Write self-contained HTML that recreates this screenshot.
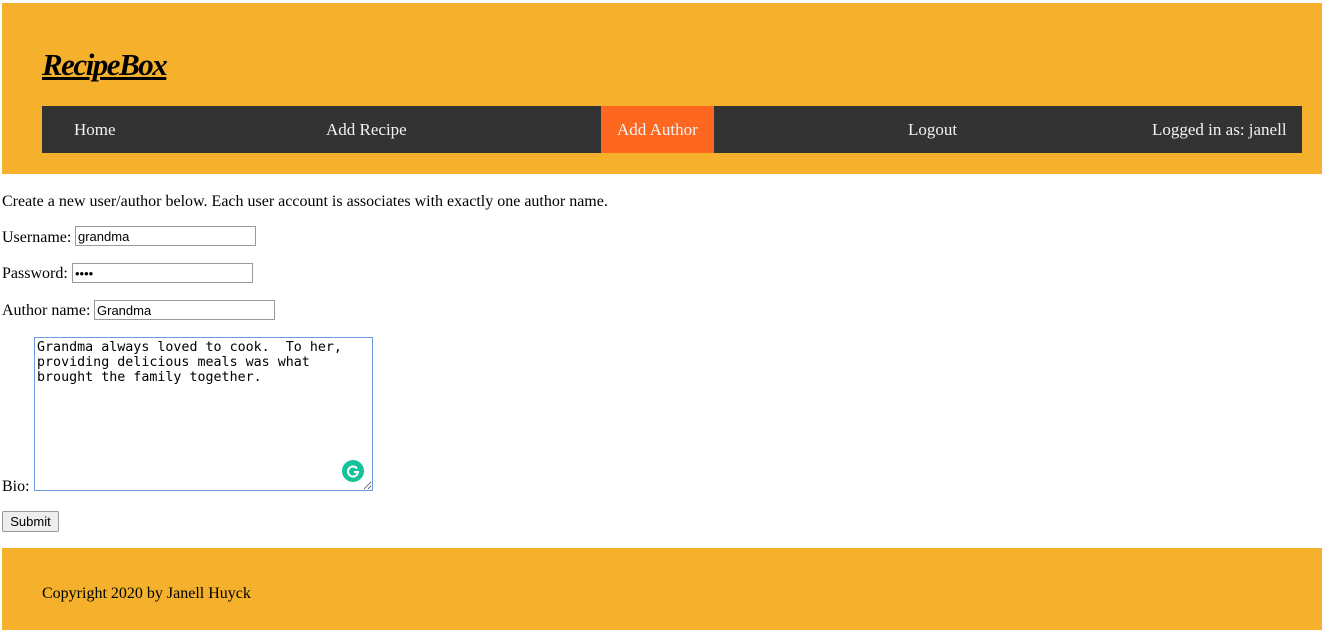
<!DOCTYPE html>
<html><head><style>
body{margin:0;font-family:"Liberation Serif",serif;font-size:16px;color:#000;background:#fff;position:relative;width:1322px;height:630px;overflow:hidden}
.hdr{position:absolute;left:2px;top:3px;width:1320px;height:171px;background:#f6b12c}
.logo{position:absolute;left:40px;top:44px;font-family:"Liberation Serif",serif;font-weight:bold;font-style:italic;font-size:31px;text-decoration:underline;text-decoration-thickness:3px;letter-spacing:-1.5px;color:#000}
.nav{position:absolute;left:40px;top:103px;width:1260px;height:47px;background:#333}
.nav span{position:absolute;top:0;line-height:47px;color:#f2f2f2;font-size:17px}
.act{background:#fd6720;padding:0 16px}
.t{position:absolute;left:2px;white-space:nowrap}
input[type=text],input[type=password]{position:absolute;height:20px;box-sizing:border-box;border:1px solid #999;font-family:"Liberation Sans",sans-serif;font-size:13px;padding:1px 2px}
textarea{position:absolute;left:34px;top:337px;width:339px;height:154px;box-sizing:border-box;border:1px solid #6a9be0;font-family:"DejaVu Sans Mono",monospace;font-size:13.33px;line-height:15px;padding:2px 24px 2px 2px;resize:both;margin:0}
.g{position:absolute;left:342px;top:460px;width:22px;height:22px;border-radius:50%;background:#15c39a}
button{position:absolute;left:2px;top:511px;width:57px;height:21px;font-family:"Liberation Sans",sans-serif;font-size:13px;border:1px solid #999;border-radius:2px;background:#eee;padding:0}
.ftr{position:absolute;left:2px;top:548px;width:1320px;height:82px;background:#f6b12c}
</style></head><body>
<div class="hdr">
<div class="logo">RecipeBox</div>
<div class="nav">
<span style="left:32px">Home</span>
<span style="left:284px">Add Recipe</span>
<span class="act" style="left:559px">Add Author</span>
<span style="left:866px">Logout</span>
<span style="left:1110px">Logged in as: janell</span>
</div>
</div>
<div class="t" style="top:193px">Create a new user/author below. Each user account is associates with exactly one author name.</div>
<div class="t" style="top:229px">Username:</div>
<input type="text" value="grandma" style="left:75px;top:226px;width:181px">
<div class="t" style="top:265px">Password:</div>
<input type="password" value="abcd" style="left:72px;top:263px;width:181px">
<div class="t" style="top:302px">Author name:</div>
<input type="text" value="Grandma" style="left:94px;top:300px;width:181px">
<div class="t" style="top:478px">Bio:</div>
<textarea>Grandma always loved to cook.  To her, providing delicious meals was what brought the family together.</textarea>
<div class="g"><svg width="22" height="22" viewBox="0 0 22 22"><path d="M15 8.5A5 5 0 1 0 16 12h-4" fill="none" stroke="#fff" stroke-width="2"/></svg></div>
<button>Submit</button>
<div class="ftr"><div style="position:absolute;left:40px;top:37px">Copyright 2020 by Janell Huyck</div></div>
</body></html>
